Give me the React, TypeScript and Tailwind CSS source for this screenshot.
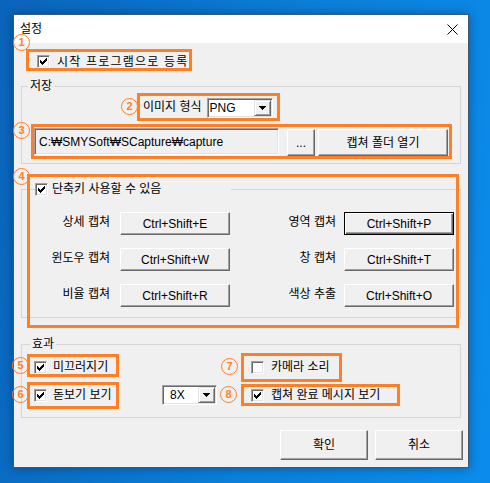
import React from "react";

function CheckMark() {
  return (
    <svg width="7" height="7" viewBox="0 0 7 7" shapeRendering="crispEdges" fill="#000">
      <rect x="6" y="0" width="1" height="1" />
      <rect x="5" y="1" width="2" height="1" />
      <rect x="0" y="2" width="1" height="1" />
      <rect x="4" y="2" width="3" height="1" />
      <rect x="0" y="3" width="2" height="1" />
      <rect x="3" y="3" width="3" height="1" />
      <rect x="0" y="4" width="5" height="1" />
      <rect x="1" y="5" width="3" height="1" />
      <rect x="2" y="6" width="1" height="1" />
    </svg>
  );
}

function CheckBox({ checked }: { checked: boolean }) {
  return (
    <span className="w-[13px] h-[13px] shrink-0 flex items-center justify-center bg-white border border-t-[#a0a0a0] border-l-[#a0a0a0] border-r-white border-b-white shadow-[inset_1px_1px_0_#696969,inset_-1px_-1px_0_#e3e3e3]">
      {checked && <CheckMark />}
    </span>
  );
}

function Arrow() {
  return (
    <svg width="7" height="4" viewBox="0 0 7 4" shapeRendering="crispEdges" fill="#000">
      <rect x="0" y="0" width="7" height="1" />
      <rect x="1" y="1" width="5" height="1" />
      <rect x="2" y="2" width="3" height="1" />
      <rect x="3" y="3" width="1" height="1" />
    </svg>
  );
}

function Btn({
  children,
  className,
  def,
}: {
  children: React.ReactNode;
  className: string;
  def?: boolean;
}) {
  const base = def
    ? "border border-black shadow-[inset_1px_1px_0_#ffffff,inset_-1px_-1px_0_#696969,inset_-2px_-2px_0_#a0a0a0]"
    : "border border-t-white border-l-white border-r-[#696969] border-b-[#696969] shadow-[inset_-1px_-1px_0_#a0a0a0]";
  return (
    <div className={`flex items-center justify-center bg-[#f0f0f0] text-black ${base} ${className}`}>
      {children}
    </div>
  );
}

function Combo({ value, className, textClass }: { value: string; className: string; textClass: string }) {
  return (
    <div
      className={`flex bg-white p-[1px] border border-t-[#a0a0a0] border-l-[#a0a0a0] border-r-white border-b-white shadow-[inset_1px_1px_0_#696969,inset_-1px_-1px_0_#e3e3e3] ${className}`}
    >
      <div className={`flex-1 flex items-center ${textClass}`}>{value}</div>
      <div className="w-[17px] h-full flex items-center justify-center bg-[#f0f0f0] border border-t-[#e3e3e3] border-l-[#e3e3e3] border-r-[#696969] border-b-[#696969] shadow-[inset_1px_1px_0_#ffffff,inset_-1px_-1px_0_#a0a0a0]">
        <Arrow />
      </div>
    </div>
  );
}

function Badge({ n, className }: { n: string; className: string }) {
  return (
    <div
      className={`absolute w-[17px] h-[17px] rounded-full border-[1.5px] border-[#ff7f27] text-[#ff7f27] text-[11px] font-bold leading-none flex items-center justify-center font-['Liberation_Sans',sans-serif] ${className}`}
    >
      {n}
    </div>
  );
}

export default function App() {
  return (
    <div className="relative w-[490px] h-[483px] overflow-hidden bg-[linear-gradient(100deg,#0a64bb_0%,#0b7fd9_55%,#0b8cec_100%)] pt-[14px] pl-[13px] font-['Liberation_Sans','Noto_Sans_CJK_KR',sans-serif] text-[12px] text-black leading-[16px]">
      <div className="w-[456px] h-[454px] border border-[#3a5877] bg-[#f0f0f0] flex flex-col shadow-[0_0_10px_rgba(0,0,0,0.35)]">
        {/* Title bar */}
        <div className="h-[28px] bg-white flex items-center justify-between pl-[6px] pr-[10px] shrink-0">
          <span>설정</span>
          <svg width="11" height="11" viewBox="0 0 11 11" stroke="#000" strokeWidth="1">
            <line x1="0.5" y1="0.5" x2="10.5" y2="10.5" />
            <line x1="10.5" y1="0.5" x2="0.5" y2="10.5" />
          </svg>
        </div>

        {/* Body */}
        <div className="flex-1 flex flex-col">
          <div className="mt-[10px] pl-[23px] h-[17px] flex items-center gap-[7px]">
            <CheckBox checked />
            <span className="tracking-[1.2px]">시작 프로그램으로 등록</span>
          </div>

          {/* 저장 */}
          <fieldset className="mt-[8px] ml-[7px] w-[440px] min-w-0 border border-[#d5d5d5] pb-[7px]">
            <legend className="ml-[6px] px-[2px] leading-[16px]">저장</legend>
            <div className="mt-[4px] pl-[121px] flex items-center gap-[5px] h-[20px]">
              <span className="pb-[3px]">이미지 형식</span>
              <Combo value="PNG" className="w-[66px] h-[20px]" textClass="pl-[1px]" />
            </div>
            <div className="mt-[10px] pl-[12px] flex items-start">
              <div className="w-[245px] h-[27px] flex items-center pl-[4px] bg-[#f0f0f0] border border-t-[#a0a0a0] border-l-[#a0a0a0] border-r-white border-b-white shadow-[inset_1px_1px_0_#696969,inset_-1px_-1px_0_#e3e3e3]">
                C:₩SMYSoft₩SCapture₩capture
              </div>
              <Btn className="ml-[8px] mt-[1px] w-[28px] h-[27px]">...</Btn>
              <Btn className="ml-[3px] mt-[1px] w-[130px] h-[27px]">캡쳐 폴더 열기</Btn>
            </div>
          </fieldset>

          {/* 단축키 */}
          <fieldset className="mt-[17px] ml-[7px] w-[440px] min-w-0 border border-[#d5d5d5] pb-[10px]">
            <legend className="ml-[13px] w-[196px]">
              <div className="flex items-center gap-[4px] h-[16px]">
                <CheckBox checked />
                <span>단축키 사용할 수 있음</span>
              </div>
            </legend>
            <div className="mt-[15px] grid grid-cols-[98px_110px_114px_110px] gap-y-[13px]">
              <div className="flex items-center justify-end pr-[10px] pb-[3px]">상세 캡쳐</div>
              <Btn className="h-[23px]">Ctrl+Shift+E</Btn>
              <div className="flex items-center justify-end pr-[8px] pb-[3px]">영역 캡쳐</div>
              <Btn className="h-[23px]" def>
                Ctrl+Shift+P
              </Btn>

              <div className="flex items-center justify-end pr-[10px] pb-[3px]">윈도우 캡쳐</div>
              <Btn className="h-[23px]">Ctrl+Shift+W</Btn>
              <div className="flex items-center justify-end pr-[8px] pb-[3px]">창 캡쳐</div>
              <Btn className="h-[23px]">Ctrl+Shift+T</Btn>

              <div className="flex items-center justify-end pr-[10px] pb-[3px]">비율 캡쳐</div>
              <Btn className="h-[23px]">Ctrl+Shift+R</Btn>
              <div className="flex items-center justify-end pr-[8px] pb-[3px]">색상 추출</div>
              <Btn className="h-[23px]">Ctrl+Shift+O</Btn>
            </div>
          </fieldset>

          {/* 효과 */}
          <fieldset className="mt-[18px] ml-[7px] w-[440px] min-w-0 border border-[#d5d5d5] pb-[11px]">
            <legend className="ml-[8px] px-[2px] leading-[16px]">효과</legend>
            <div className="mt-[4px] pl-[12px] flex items-center h-[22px]">
              <div className="w-[128px] flex items-center gap-[6px]">
                <CheckBox checked />
                <span>미끄러지기</span>
              </div>
              <div className="w-[89px]" />
              <div className="flex items-center gap-[7px]">
                <CheckBox checked={false} />
                <span>카메라 소리</span>
              </div>
            </div>
            <div className="mt-[6px] pl-[12px] flex items-center h-[22px]">
              <div className="w-[128px] flex items-center gap-[6px]">
                <CheckBox checked />
                <span>돋보기 보기</span>
              </div>
              <div className="w-[89px] flex items-center">
                <Combo value="8X" className="w-[55px] h-[20px]" textClass="pl-[6px]" />
              </div>
              <div className="flex items-center gap-[7px]">
                <CheckBox checked />
                <span>캡쳐 완료 메시지 보기</span>
              </div>
            </div>
          </fieldset>

          <div className="mt-[12px] pr-[5px] flex justify-end gap-[7px]">
            <Btn className="w-[88px] h-[30px]">확인</Btn>
            <Btn className="w-[88px] h-[30px]">취소</Btn>
          </div>
        </div>
      </div>

      {/* Annotation overlays */}
      <div className="absolute left-[26px] top-[49px] w-[166px] h-[22px] border-[3px] border-[#ff7f27]" />
      <div className="absolute left-[137px] top-[93px] w-[143px] h-[28px] border-[3px] border-[#ff7f27]" />
      <div className="absolute left-[31px] top-[124px] w-[421px] h-[35px] border-[3px] border-[#ff7f27]" />
      <div className="absolute left-[27px] top-[174px] w-[432px] h-[154px] border-[3px] border-[#ff7f27]" />
      <div className="absolute left-[27px] top-[354px] w-[92px] h-[23px] border-[3px] border-[#ff7f27]" />
      <div className="absolute left-[27px] top-[382px] w-[92px] h-[27px] border-[3px] border-[#ff7f27]" />
      <div className="absolute left-[241px] top-[353px] w-[101px] h-[29px] border-[3px] border-[#ff7f27]" />
      <div className="absolute left-[241px] top-[384px] w-[159px] h-[22px] border-[3px] border-[#ff7f27]" />

      <Badge n="1" className="left-[13px] top-[34px]" />
      <Badge n="2" className="left-[121px] top-[98px]" />
      <Badge n="3" className="left-[13px] top-[122px]" />
      <Badge n="4" className="left-[13px] top-[168px]" />
      <Badge n="5" className="left-[12px] top-[357px]" />
      <Badge n="6" className="left-[12px] top-[386px]" />
      <Badge n="7" className="left-[221px] top-[358px]" />
      <Badge n="8" className="left-[220px] top-[386px]" />
    </div>
  );
}
